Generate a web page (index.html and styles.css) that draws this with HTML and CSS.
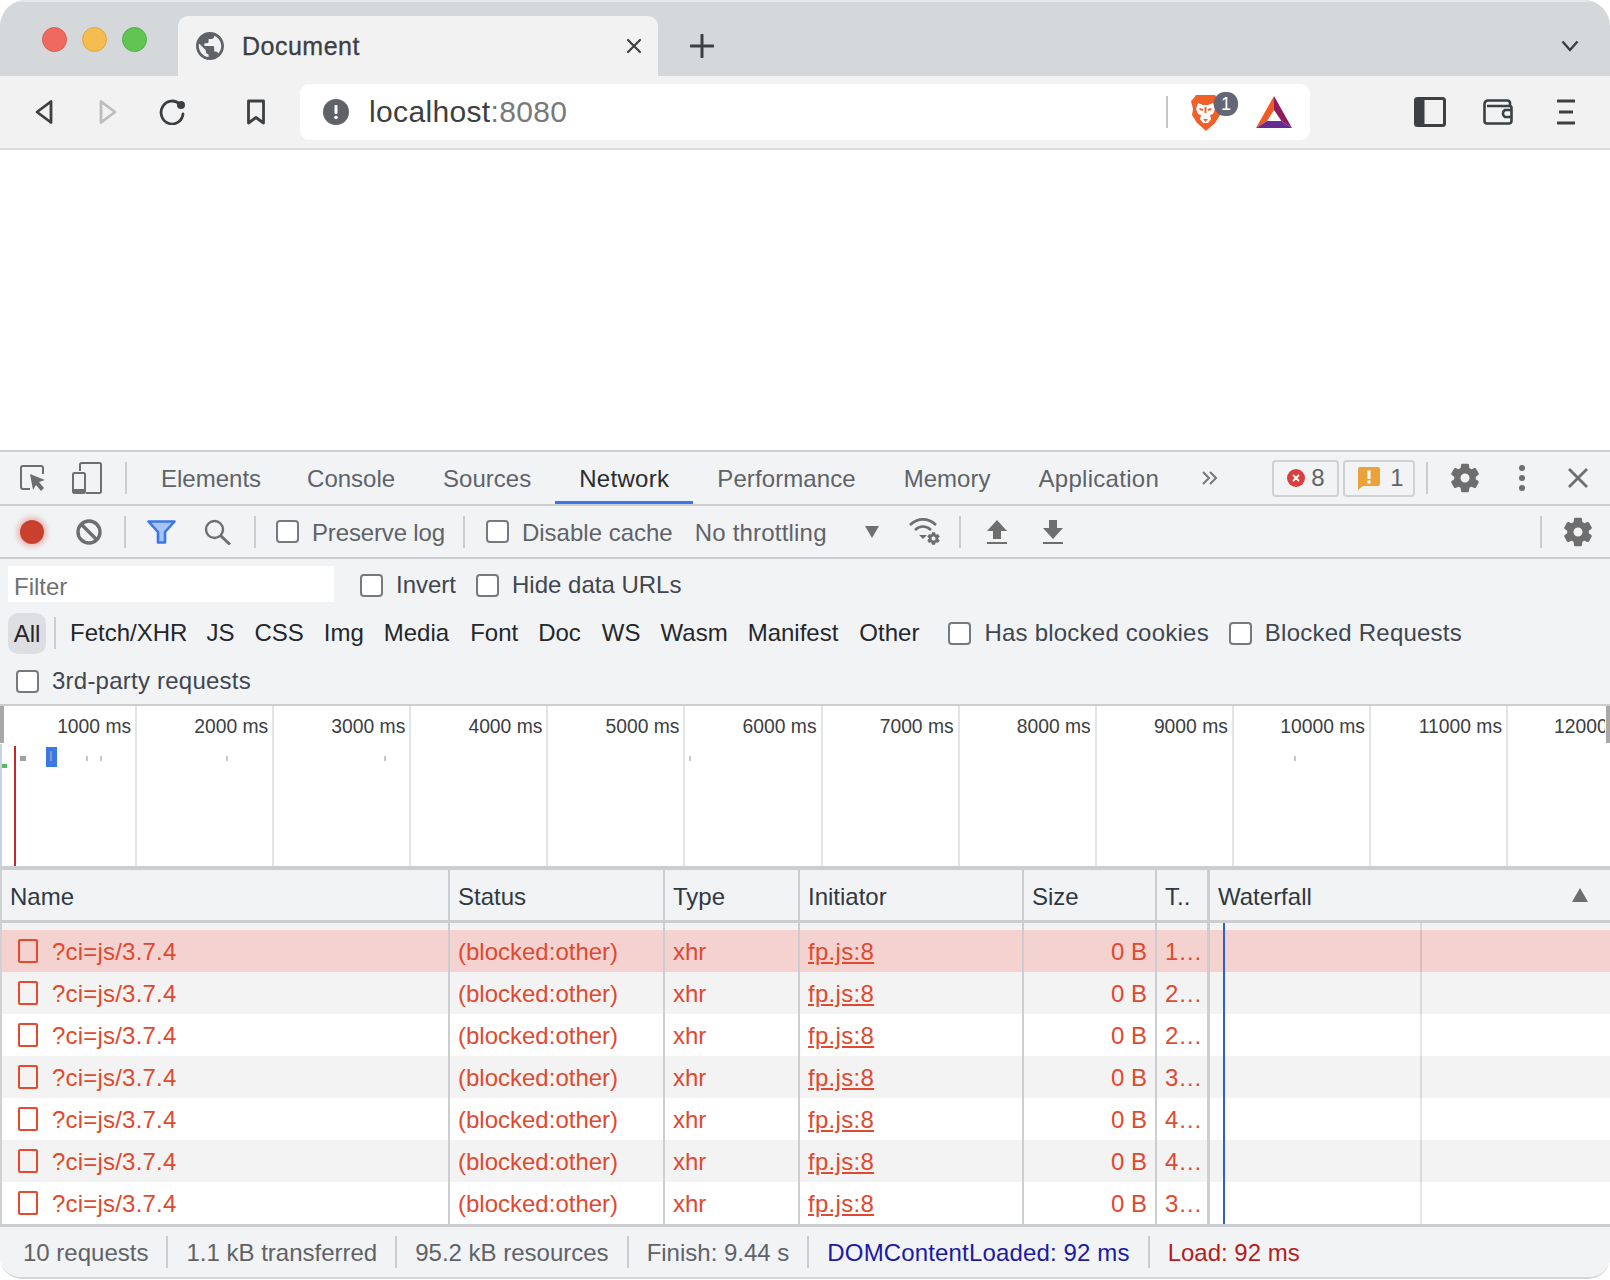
FILE: index.html
```html
<!DOCTYPE html>
<html lang="en">
<head>
<meta charset="utf-8">
<title>Document</title>
<link rel="stylesheet" href="styles.css">
</head>
<body>
<svg class="defs" width="0" height="0">
  <symbol id="gear" viewBox="0 0 24 24"><path d="M19.14 12.94c.04-.3.06-.61.06-.94 0-.32-.02-.64-.07-.94l2.03-1.58c.18-.14.23-.41.12-.61l-1.92-3.32c-.12-.22-.37-.29-.59-.22l-2.39.96c-.5-.38-1.03-.7-1.62-.94l-.36-2.54c-.04-.24-.24-.41-.48-.41h-3.84c-.24 0-.43.17-.47.41l-.36 2.54c-.59.24-1.13.57-1.62.94l-2.39-.96c-.22-.08-.47 0-.59.22L2.74 8.87c-.12.21-.08.47.12.61l2.03 1.58c-.05.3-.09.63-.09.94s.02.64.07.94l-2.03 1.58c-.18.14-.23.41-.12.61l1.92 3.32c.12.22.37.29.59.22l2.39-.96c.5.38 1.03.7 1.62.94l.36 2.54c.05.24.24.41.48.41h3.84c.24 0 .44-.17.47-.41l.36-2.54c.59-.24 1.13-.56 1.62-.94l2.39.96c.22.08.47 0 .59-.22l1.92-3.32c.12-.22.07-.47-.12-.61l-2.01-1.58zM12 15.6c-1.98 0-3.6-1.62-3.6-3.6s1.62-3.6 3.6-3.6 3.6 1.62 3.6 3.6-1.62 3.6-3.6 3.6z" fill="#6e6e6e" stroke="#6e6e6e" stroke-width=".8"/></symbol>
</svg>
<div class="window">
  <header class="tabstrip">
    <div class="lights"><span class="light l-red"></span><span class="light l-yellow"></span><span class="light l-green"></span></div>
    <div class="tab">
      <svg class="i-globe" viewBox="2 2 20 20"><path fill="#5f6368" d="M12 2C6.48 2 2 6.48 2 12s4.48 10 10 10 10-4.48 10-10S17.52 2 12 2zm-1 17.93c-3.95-.49-7-3.85-7-7.93 0-.62.08-1.21.21-1.79L9 15v1c0 1.1.9 2 2 2v1.93zm6.9-2.54c-.26-.81-1-1.39-1.9-1.39h-1v-3c0-.55-.45-1-1-1H8v-2h2c.55 0 1-.45 1-1V7h2c1.1 0 2-.9 2-2v-.41c2.93 1.19 5 4.06 5 7.41 0 2.08-.8 3.97-2.1 5.39z"/></svg>
      <span class="tab-title">Document</span>
      <svg class="i-tabclose" viewBox="0 0 16 16"><path d="M2 2l12 12M14 2L2 14" stroke="#3c4043" stroke-width="2.200" stroke-linecap="round"/></svg>
    </div>
    <svg class="i-plus" viewBox="0 0 24 24"><path d="M12 1v22M1 12h22" stroke="#3c4043" stroke-width="3" stroke-linecap="round"/></svg>
    <svg class="i-chevron" viewBox="0 0 18 12"><path d="M1.500 1.500L9 10l7.500-8.500" fill="none" stroke="#3c4043" stroke-width="2.400"/></svg>
  </header>

  <nav class="toolbar">
    <svg class="i-nav back" viewBox="0 0 20 26"><path d="M17 2.500L3 13l14 10.500z" fill="none" stroke="#3c4043" stroke-width="2.800" stroke-linejoin="round"/></svg>
    <svg class="i-nav fwd" viewBox="0 0 20 26"><path d="M3 2.500L17 13 3 23.500z" fill="none" stroke="#bdbdbd" stroke-width="2.800" stroke-linejoin="round"/></svg>
    <svg class="i-reload" viewBox="0 0 28 26"><path d="M21 5.500A11 11.500 0 1 0 24 15" fill="none" stroke="#3c4043" stroke-width="2.800" stroke-linecap="round"/><circle cx="22" cy="6" r="4" fill="#3c4043"/></svg>
    <svg class="i-bookmark" viewBox="0 0 20 26"><path d="M2.500 2h15v22L10 18.500 2.500 24z" fill="none" stroke="#3c4043" stroke-width="2.800" stroke-linejoin="round"/></svg>
    <div class="omnibox">
      <svg class="i-info" viewBox="0 0 26 26"><circle cx="13" cy="13" r="13" fill="#5f6368"/><rect x="11.500" y="6" width="3" height="9" rx="1" fill="#fff"/><circle cx="13" cy="18.500" r="1.800" fill="#fff"/></svg>
      <div class="url"><span class="host">localhost</span><span class="port">:8080</span></div>
      <span class="omni-sep"></span>
      <div class="shield">
        <svg class="i-lion" viewBox="0 0 31 36"><path fill="#f1602a" d="M6 0h19l3 4 3 2-2 8 1 6-5 8-9 8-9-8-5-8 1-6L1 6l2-2z"/><path fill="#fff" d="M8 8l5 2h5l5-2 2 6-2 5-3 1 1 4-3 4h-5l-3-4 1-4-3-1-2-5z"/><path fill="#f1602a" d="M9.500 13l4 1-1 2-3-1zM21.500 13l-4 1 1 2 3-1zM14.500 12h2v6h-2zM13 24h5l-2.500 3z"/></svg>
        <span class="shield-count">1</span>
      </div>
      <svg class="i-bat" viewBox="0 0 36 32"><path fill="#f15a22" d="M18 0v14L11 25 0 32z"/><path fill="#8f1d5e" d="M18 0l18 32-10.500-7L18 14z"/><path fill="#662d91" d="M0 32l11-7h14.500L36 32z"/></svg>
    </div>
    <svg class="i-side" viewBox="0 0 32 30"><rect x="1.500" y="1.500" width="29" height="27" rx="2" fill="none" stroke="#3c4043" stroke-width="3"/><rect x="1.500" y="1.500" width="9" height="27" fill="#3c4043"/></svg>
    <svg class="i-wallet" viewBox="0 0 30 26"><path d="M27 7V4a2.500 2.500 0 0 0-2.500-2.500H5A3.500 3.500 0 0 0 1.500 5v17A2.500 2.500 0 0 0 4 24.500h22a2.500 2.500 0 0 0 2.500-2.500V9a2 2 0 0 0-2-2H4" fill="none" stroke="#3c4043" stroke-width="2.600"/><path d="M28 11h-6a4 4 0 0 0 0 7h6" fill="none" stroke="#3c4043" stroke-width="2.600"/></svg>
    <svg class="i-menu" viewBox="0 0 18 26"><path d="M0 2h18M2 13h14M0 24h18" stroke="#3c4043" stroke-width="3"/></svg>
  </nav>

  <main class="page"></main>

  <section class="devtools">
    <div class="dt-tabs">
      <svg class="i-inspect" viewBox="0 0 26 26"><path d="M10 24H3a2 2 0 0 1-2-2V3a2 2 0 0 1 2-2h18a2 2 0 0 1 2 2v6" fill="none" stroke="#6e6e6e" stroke-width="2"/><path d="M10 9l15 6-6 2 5 6-3 3-5-6-3 5z" fill="#6e6e6e"/></svg>
      <svg class="i-device" viewBox="0 0 30 32"><path d="M8 9V2.500A1.500 1.500 0 0 1 9.500 1h18A1.500 1.500 0 0 1 29 2.500v27a1.500 1.500 0 0 1-1.500 1.500H14" fill="none" stroke="#6e6e6e" stroke-width="2"/><rect x="1" y="11" width="12" height="20" rx="1.500" fill="none" stroke="#6e6e6e" stroke-width="2"/><rect x="1" y="27" width="12" height="4" fill="#6e6e6e"/></svg>
      <span class="vsep tab-sep"></span>
      <ul class="panels">
        <li class="panel p-elements">Elements</li><li class="panel">Console</li><li class="panel">Sources</li><li class="panel active">Network</li><li class="panel p-perf">Performance</li><li class="panel">Memory</li><li class="panel p-app">Application</li>
      </ul>
      <svg class="i-more" viewBox="0 0 18 16"><path d="M2 2l6 6-6 6M9 2l6 6-6 6" fill="none" stroke="#777" stroke-width="2"/></svg>
      <div class="counter err"><svg class="i-err" viewBox="0 0 18 18"><circle cx="9" cy="9" r="9" fill="#d93f3f"/><path d="M6 6l6 6M12 6l-6 6" stroke="#fff" stroke-width="1.800"/></svg><span>8</span></div>
      <div class="counter warn"><svg class="i-warn" viewBox="0 0 22 23"><path fill="#e9a33a" d="M2 0h18a2 2 0 0 1 2 2v15a2 2 0 0 1-2 2H5l-5 4V2a2 2 0 0 1 2-2z"/><rect x="9.500" y="3.500" width="3" height="8.500" fill="#fff"/><rect x="9.500" y="13.500" width="3" height="3" fill="#fff"/></svg><span>1</span></div>
      <span class="vsep end-sep"></span>
      <svg class="i-gear top-gear"><use href="#gear"/></svg>
      <svg class="i-dots" viewBox="0 0 6 26"><circle cx="3" cy="3" r="3" fill="#6e6e6e"/><circle cx="3" cy="13" r="3" fill="#6e6e6e"/><circle cx="3" cy="23" r="3" fill="#6e6e6e"/></svg>
      <svg class="i-dtclose" viewBox="0 0 20 20"><path d="M1 1l18 18M19 1L1 19" stroke="#6e6e6e" stroke-width="2.800"/></svg>
    </div>

    <div class="dt-toolbar">
      <span class="record"></span>
      <svg class="i-clear" viewBox="0 0 26 26"><circle cx="13" cy="13" r="11" fill="none" stroke="#6e6e6e" stroke-width="3.400"/><path d="M5 5l16 16" stroke="#6e6e6e" stroke-width="3.400"/></svg>
      <span class="vsep s1"></span>
      <svg class="i-filter" viewBox="0 0 29 24"><path d="M1.500 1.500h26L18 12v10.500h-7V12z" fill="#a8c4f5" stroke="#3b78e7" stroke-width="2.600" stroke-linejoin="round"/></svg>
      <svg class="i-search" viewBox="0 0 27 26"><circle cx="10.500" cy="10.500" r="8.500" fill="none" stroke="#6e6e6e" stroke-width="2.400"/><path d="M16.500 16.500L26 25.500" stroke="#6e6e6e" stroke-width="3"/></svg>
      <span class="vsep s2"></span>
      <label class="check preserve"><span class="box"></span><span class="lbl">Preserve log</span></label>
      <span class="vsep s3"></span>
      <label class="check cache"><span class="box"></span><span class="lbl">Disable cache</span></label>
      <span class="throttle">No throttling</span>
      <span class="caret"></span>
      <svg class="i-wifi" viewBox="0 0 32 28"><path d="M1 7c8-7.500 18-7.500 26 0M6 12c5-4.500 11-4.500 16 0" fill="none" stroke="#6e6e6e" stroke-width="2.600"/><path d="M10 17h8l-4 4z" fill="#6e6e6e"/><use href="#gear" x="17" y="13" width="15" height="15"/></svg>
      <span class="vsep s4"></span>
      <svg class="i-arrow up" viewBox="0 0 20 24"><path d="M10 0l10 11h-6v8H6v-8H0z" fill="#6e6e6e"/><rect y="22" width="20" height="2" fill="#6e6e6e"/></svg>
      <svg class="i-arrow down" viewBox="0 0 20 24"><path d="M10 19L0 8h6V0h8v8h6z" fill="#6e6e6e"/><rect y="22" width="20" height="2" fill="#6e6e6e"/></svg>
      <span class="spacer"></span>
      <span class="vsep s5"></span>
      <svg class="i-gear row-gear"><use href="#gear"/></svg>
    </div>

    <div class="filters">
      <div class="filter-row first">
        <span class="filter-input">Filter</span>
        <label class="check invert"><span class="box"></span>Invert</label>
        <label class="check hide"><span class="box"></span>Hide data URLs</label>
      </div>
      <div class="filter-row types">
        <span class="pill">All</span><span class="vsep pill-sep"></span>
        <span class="type t-fetch">Fetch/XHR</span><span class="type t-js">JS</span><span class="type">CSS</span><span class="type">Img</span><span class="type">Media</span><span class="type t-font">Font</span><span class="type">Doc</span><span class="type t-ws">WS</span><span class="type">Wasm</span><span class="type">Manifest</span><span class="type t-other">Other</span>
        <label class="check blocked-c wide"><span class="box"></span>Has blocked cookies</label>
        <label class="check blocked-r wide"><span class="box"></span>Blocked Requests</label>
      </div>
      <div class="filter-row third">
        <label class="check wide"><span class="box"></span>3rd-party requests</label>
      </div>
    </div>

    <div class="overview">
      <div class="ticks">
        <div class="tick"><span>1000 ms</span></div><div class="tick"><span>2000 ms</span></div><div class="tick"><span>3000 ms</span></div><div class="tick"><span>4000 ms</span></div><div class="tick"><span>5000 ms</span></div><div class="tick"><span>6000 ms</span></div><div class="tick"><span>7000 ms</span></div><div class="tick"><span>8000 ms</span></div><div class="tick"><span>9000 ms</span></div><div class="tick"><span>10000 ms</span></div><div class="tick"><span>11000 ms</span></div><div class="tick last"><span>12000 ms</span></div>
      </div>
      <i class="mark grip-l"></i><i class="mark grip-r"></i><i class="mark edge"></i>
      <i class="mark redline"></i><i class="mark m-green"></i><i class="mark bluebar"></i><i class="mark bluecore"></i>
      <i class="mark dash dash-wide" style="left:20px"></i>
      <i class="mark dash" style="left:86px"></i><i class="mark dash" style="left:100px"></i><i class="mark dash" style="left:226px"></i><i class="mark dash" style="left:384px"></i><i class="mark dash" style="left:689px"></i><i class="mark dash" style="left:1294px"></i>
    </div>

    <div class="grid">
      <div class="row head"><div class="c">Name</div><div class="c">Status</div><div class="c">Type</div><div class="c">Initiator</div><div class="c">Size</div><div class="c">T..</div><div class="c wf">Waterfall<span class="sort"></span></div></div>
      <div class="body">
        <div class="row pad"><div class="c"></div><div class="c"></div><div class="c"></div><div class="c"></div><div class="c"></div><div class="c"></div><div class="c"></div></div>
        <div class="row req sel"><div class="c name"><span class="doc"></span>?ci=js/3.7.4</div><div class="c">(blocked:other)</div><div class="c">xhr</div><div class="c"><a class="init">fp.js:8</a></div><div class="c size">0 B</div><div class="c">1…</div><div class="c"></div></div>
        <div class="row req"><div class="c name"><span class="doc"></span>?ci=js/3.7.4</div><div class="c">(blocked:other)</div><div class="c">xhr</div><div class="c"><a class="init">fp.js:8</a></div><div class="c size">0 B</div><div class="c">2…</div><div class="c"></div></div>
        <div class="row req"><div class="c name"><span class="doc"></span>?ci=js/3.7.4</div><div class="c">(blocked:other)</div><div class="c">xhr</div><div class="c"><a class="init">fp.js:8</a></div><div class="c size">0 B</div><div class="c">2…</div><div class="c"></div></div>
        <div class="row req"><div class="c name"><span class="doc"></span>?ci=js/3.7.4</div><div class="c">(blocked:other)</div><div class="c">xhr</div><div class="c"><a class="init">fp.js:8</a></div><div class="c size">0 B</div><div class="c">3…</div><div class="c"></div></div>
        <div class="row req"><div class="c name"><span class="doc"></span>?ci=js/3.7.4</div><div class="c">(blocked:other)</div><div class="c">xhr</div><div class="c"><a class="init">fp.js:8</a></div><div class="c size">0 B</div><div class="c">4…</div><div class="c"></div></div>
        <div class="row req"><div class="c name"><span class="doc"></span>?ci=js/3.7.4</div><div class="c">(blocked:other)</div><div class="c">xhr</div><div class="c"><a class="init">fp.js:8</a></div><div class="c size">0 B</div><div class="c">4…</div><div class="c"></div></div>
        <div class="row req"><div class="c name"><span class="doc"></span>?ci=js/3.7.4</div><div class="c">(blocked:other)</div><div class="c">xhr</div><div class="c"><a class="init">fp.js:8</a></div><div class="c size">0 B</div><div class="c">3…</div><div class="c"></div></div>
        <i class="wf-line dcl"></i><i class="wf-line load"></i>
      </div>
    </div>

    <footer class="status">
      <span class="st">10 requests</span><span class="st">1.1 kB transferred</span><span class="st">95.2 kB resources</span><span class="st">Finish: 9.44 s</span><span class="st blue">DOMContentLoaded: 92 ms</span><span class="st redt">Load: 92 ms</span>
    </footer>
  </section>
</div>
</body>
</html>
```

FILE: styles.css
```css
* { box-sizing: border-box; }
html, body { margin: 0; padding: 0; background: #fff; }
body { width: 1610px; height: 1280px; overflow: hidden; font-family: "Liberation Sans", Arial, sans-serif; }
.defs { position: absolute; }
svg { display: block; flex: none; }

.window { width: 1610px; height: 1279px; display: flex; flex-direction: column; border-radius: 26px 26px 22px 22px; overflow: hidden; border-bottom: 2px solid #d3d5d8; }

/* tab strip */
.tabstrip { height: 76px; flex: none; background: #d5d8db; border-top: 2px solid #e4e6e8; display: flex; align-items: flex-start; position: relative; }
.lights { display: flex; gap: 15px; margin: 25px 0 0 42px; width: 124px; }
.light { width: 25px; height: 25px; border-radius: 50%; flex: none; }
.l-red { background: #ee6a5f; border: 1px solid #e0584d; }
.l-yellow { background: #f5bd4f; border: 1px solid #dfa63b; }
.l-green { background: #61c554; border: 1px solid #51ae45; }
.tab { margin: 14px 0 0 12px; width: 480px; height: 60px; background: #f2f2f2; border-radius: 10px 10px 0 0; display: flex; align-items: center; padding-left: 18px; }
.i-globe { width: 28px; height: 28px; }
.tab-title { margin-left: 18px; font-size: 25px; letter-spacing: .5px; color: #3c4043; flex: 1; -webkit-text-stroke: .3px #3c4043; }
.i-tabclose { width: 16px; height: 16px; margin-right: 16px; }
.i-plus { width: 24px; height: 24px; margin: 32px 0 0 32px; }
.i-chevron { width: 18px; height: 12px; position: absolute; left: 1561px; top: 38px; }

/* toolbar */
.toolbar { height: 74px; flex: none; background: #f2f2f2; border-bottom: 2px solid #d8dadd; display: flex; align-items: center; }
.i-nav { width: 20px; height: 26px; }
.back { margin-left: 34px; }
.fwd { margin-left: 44px; }
.i-reload { width: 28px; height: 26px; margin-left: 41px; }
.i-bookmark { width: 20px; height: 26px; margin-left: 59px; }
.omnibox { margin-left: 34px; width: 1010px; height: 56px; background: #fff; border-radius: 9px; display: flex; align-items: center; padding: 0 18px 0 23px; }
.i-info { width: 26px; height: 26px; }
.url { margin-left: 20px; font-size: 30px; letter-spacing: .35px; flex: 1; }
.host { color: #3c4043; }
.port { color: #77797c; }
.omni-sep { width: 2px; height: 32px; background: #c4c6c8; }
.shield { margin-left: 22px; width: 49px; height: 40px; position: relative; }
.i-lion { width: 31px; height: 36px; margin-top: 3px; }
.shield-count { position: absolute; left: 24px; top: 0; width: 24px; height: 24px; border-radius: 11px; background: #636775; color: #fff; font-size: 18px; line-height: 24px; text-align: center; }
.i-bat { width: 36px; height: 32px; margin-left: 17px; }
.i-side { width: 32px; height: 30px; margin-left: 104px; }
.i-wallet { width: 30px; height: 26px; margin-left: 37px; }
.i-menu { width: 18px; height: 26px; margin-left: 44px; }

.page { flex: 1; background: #fff; }

/* devtools */
.devtools { flex: none; background: #f1f3f5; border-top: 2px solid #cbcdd1; }
.dt-tabs { height: 54px; border-bottom: 2px solid #cbcdd1; display: flex; align-items: center; }
.i-inspect { width: 26px; height: 26px; margin-left: 20px; }
.i-device { width: 30px; height: 32px; margin-left: 26px; }
.vsep { width: 2px; height: 32px; background: #cbcdd1; flex: none; }
.tab-sep { margin-left: 23px; }
.panels { list-style: none; margin: 0 0 0 10px; padding: 0; display: flex; height: 100%; }
.panel { padding: 0 24px; font-size: 24px; line-height: 54px; color: #5f6368; }
.p-elements { padding-right: 22px; }
.p-perf { letter-spacing: .1px; }
.p-app { letter-spacing: .3px; }
.panel.active { color: #2a2c2f; letter-spacing: .3px; box-shadow: inset 0 -3px 0 #3b78e7; }
.i-more { width: 18px; height: 16px; margin-left: 18px; }
.counter { height: 37px; border: 2px solid #cfd1d5; border-radius: 4px; display: flex; align-items: center; font-size: 24px; color: #5f6368; }
.err { width: 67px; margin-left: 53px; padding-left: 13px; gap: 6px; }
.warn { width: 72px; margin-left: 4px; padding-left: 13px; gap: 10px; }
.i-err { width: 18px; height: 18px; }
.i-warn { width: 22px; height: 23px; }
.end-sep { margin-left: 11px; }
.i-gear { width: 34px; height: 34px; }
.top-gear { margin-left: 20px; }
.i-dots { width: 6px; height: 26px; margin-left: 37px; }
.i-dtclose { width: 20px; height: 20px; margin-left: 43px; }

.dt-toolbar { height: 53px; border-bottom: 2px solid #cbcdd1; display: flex; align-items: center; font-size: 24px; color: #5f6368; }
.record { width: 24px; height: 24px; border-radius: 50%; background: #c9402f; box-shadow: 0 0 5px 3px rgba(217,80,70,.35); margin-left: 20px; }
.i-clear { width: 26px; height: 26px; margin-left: 32px; }
.s1 { margin-left: 22px; }
.i-filter { width: 29px; height: 24px; margin-left: 21px; }
.i-search { width: 27px; height: 26px; margin-left: 28px; }
.s2 { margin-left: 23px; }
.check { display: flex; align-items: center; gap: 13px; font-size: 24px; color: #5f6368; white-space: nowrap; }
.box { width: 23px; height: 23px; background: #fff; border: 2px solid #76797d; border-radius: 4px; flex: none; }
.lbl { padding-top: 2px; }
.preserve { margin-left: 20px; }
.preserve .lbl { letter-spacing: -.15px; }
.s3 { margin-left: 18px; }
.cache { margin-left: 21px; }
.throttle { margin-left: 22px; width: 170px; padding-top: 2px; letter-spacing: .2px; }
.caret { width: 0; height: 0; border-left: 7px solid transparent; border-right: 7px solid transparent; border-top: 12px solid #6e6e6e; }
.i-wifi { width: 32px; height: 28px; margin-left: 30px; }
.s4 { margin-left: 18px; }
.i-arrow { width: 20px; height: 24px; }
.up { margin-left: 26px; }
.down { margin-left: 36px; }
.spacer { flex: 1; }
.s5 { margin-right: 19px; }
.row-gear { margin-right: 15px; }

.filters { height: 147px; border-bottom: 2px solid #cbcdd1; padding-top: 6px; }
.filter-row { display: flex; align-items: center; }
.filter-row .check { color: #3f4650; }
.filter-row .wide { letter-spacing: .23px; }
.first { height: 40px; }
.filter-input { width: 326px; height: 36px; margin: 0 0 2px 8px; background: #fff; font-size: 24px; color: #6e7175; line-height: 42px; padding-left: 6px; }
.invert { margin-left: 26px; }
.hide { margin-left: 20px; }
.types { height: 44px; margin-top: 6px; font-size: 24px; color: #24272b; }
.pill { margin-left: 8px; width: 38px; height: 41px; background: #dcdee2; border-radius: 10px; text-align: center; line-height: 41px; }
.pill-sep { margin-left: 8px; height: 32px; }
.type { margin-left: 20px; }
.t-fetch { margin-left: 14px; }
.t-js { margin-left: 19px; }
.t-font { margin-left: 21px; }
.t-ws { margin-left: 21px; }
.t-other { margin-left: 21px; }
.blocked-c { margin-left: 29px; }
.blocked-r { margin-left: 20px; }
.third { height: 44px; padding-left: 16px; margin-top: 4px; }

.overview { height: 160px; background: #fff; position: relative; overflow: hidden; }
.ticks { display: flex; height: 100%; font-size: 19.300px; color: #3c4043; }
.tick { width: 137.100px; flex: none; border-right: 2px solid #e3e4e6; text-align: right; padding: 10px 4px 0 0; white-space: nowrap; }
.tick.last { width: 97px; border-right: 0; overflow: hidden; text-align: left; padding-left: 46px; padding-right: 0; }
.mark { position: absolute; display: block; }
.grip-l { left: 0; top: 0; width: 4px; height: 37px; background: #a8a8a8; }
.grip-r { right: 0; top: 0; width: 4px; height: 37px; background: #a8a8a8; }
.edge { left: 0; top: 38px; width: 2px; height: 123px; background: #c9d3e6; }
.redline { left: 14px; top: 40px; width: 2px; height: 121px; background: #c62828; }
.m-green { left: 2px; top: 58px; width: 5px; height: 4px; background: #5cb85c; }
.bluebar { left: 46px; top: 41px; width: 11px; height: 20px; background: #3b78e7; }
.bluecore { left: 50px; top: 45px; width: 2px; height: 10px; background: #8b99b3; }
.dash { top: 50px; width: 2px; height: 5px; background: #c8c8c8; }
.dash-wide { width: 6px; background: #a0a0a0; }

.grid { border-left: 2px solid #cfd1d5; border-top: 4px solid #cbcdd1; }
.row { display: grid; grid-template-columns: 448px 215px 135px 224px 133px 53px 1fr; }
.c { border-right: 2px solid #cbcdd1; font-size: 24px; white-space: nowrap; overflow: hidden; padding-left: 8px; }
.c:last-child { border-right: 0; }
.c:nth-child(6) { border-right-width: 3px; }
.head { height: 53px; background: #f1f3f5; border-bottom: 3px solid #cbcdd1; line-height: 54px; color: #303942; }
.wf { position: relative; }
.sort { position: absolute; right: 22px; top: 18px; width: 0; height: 0; border-left: 8px solid transparent; border-right: 8px solid transparent; border-bottom: 14px solid #6e6e6e; }
.body { position: relative; height: 301px; overflow: hidden; background: #fff; }
.pad { height: 7px; background: #f3f3f3; }
.req { height: 42px; line-height: 43px; color: #e0492f; }
.req:nth-child(odd) { background: #f3f3f3; }
.req:nth-child(even) { background: #fff; }
.req.sel { background: #f4d2cf; }
.c.name { display: flex; align-items: center; padding-left: 16px; letter-spacing: .2px; }
.doc { width: 20px; height: 24px; border: 2px solid #e8482d; border-radius: 2px; margin-right: 14px; flex: none; }
.init { text-decoration: underline; letter-spacing: .3px; }
.c.size { text-align: right; padding-right: 8px; }
.wf-line { position: absolute; top: 0; bottom: 0; display: block; width: 2px; }
.dcl { left: 1221px; background: #2a62c9; }
.load { left: 1418px; background: rgba(0,0,0,.1); }

.status { height: 53px; border-top: 3px solid #cbcdd1; display: flex; align-items: center; font-size: 24px; color: #5f6368; padding-left: 5px; }
.st { padding: 2px 18px 0; line-height: 30px; border-right: 2px solid #cbcdd1; }
.st:last-child { border-right: 0; }
.blue { color: #1a1aa6; letter-spacing: .15px; }
.redt { color: #b71c1c; }
```
